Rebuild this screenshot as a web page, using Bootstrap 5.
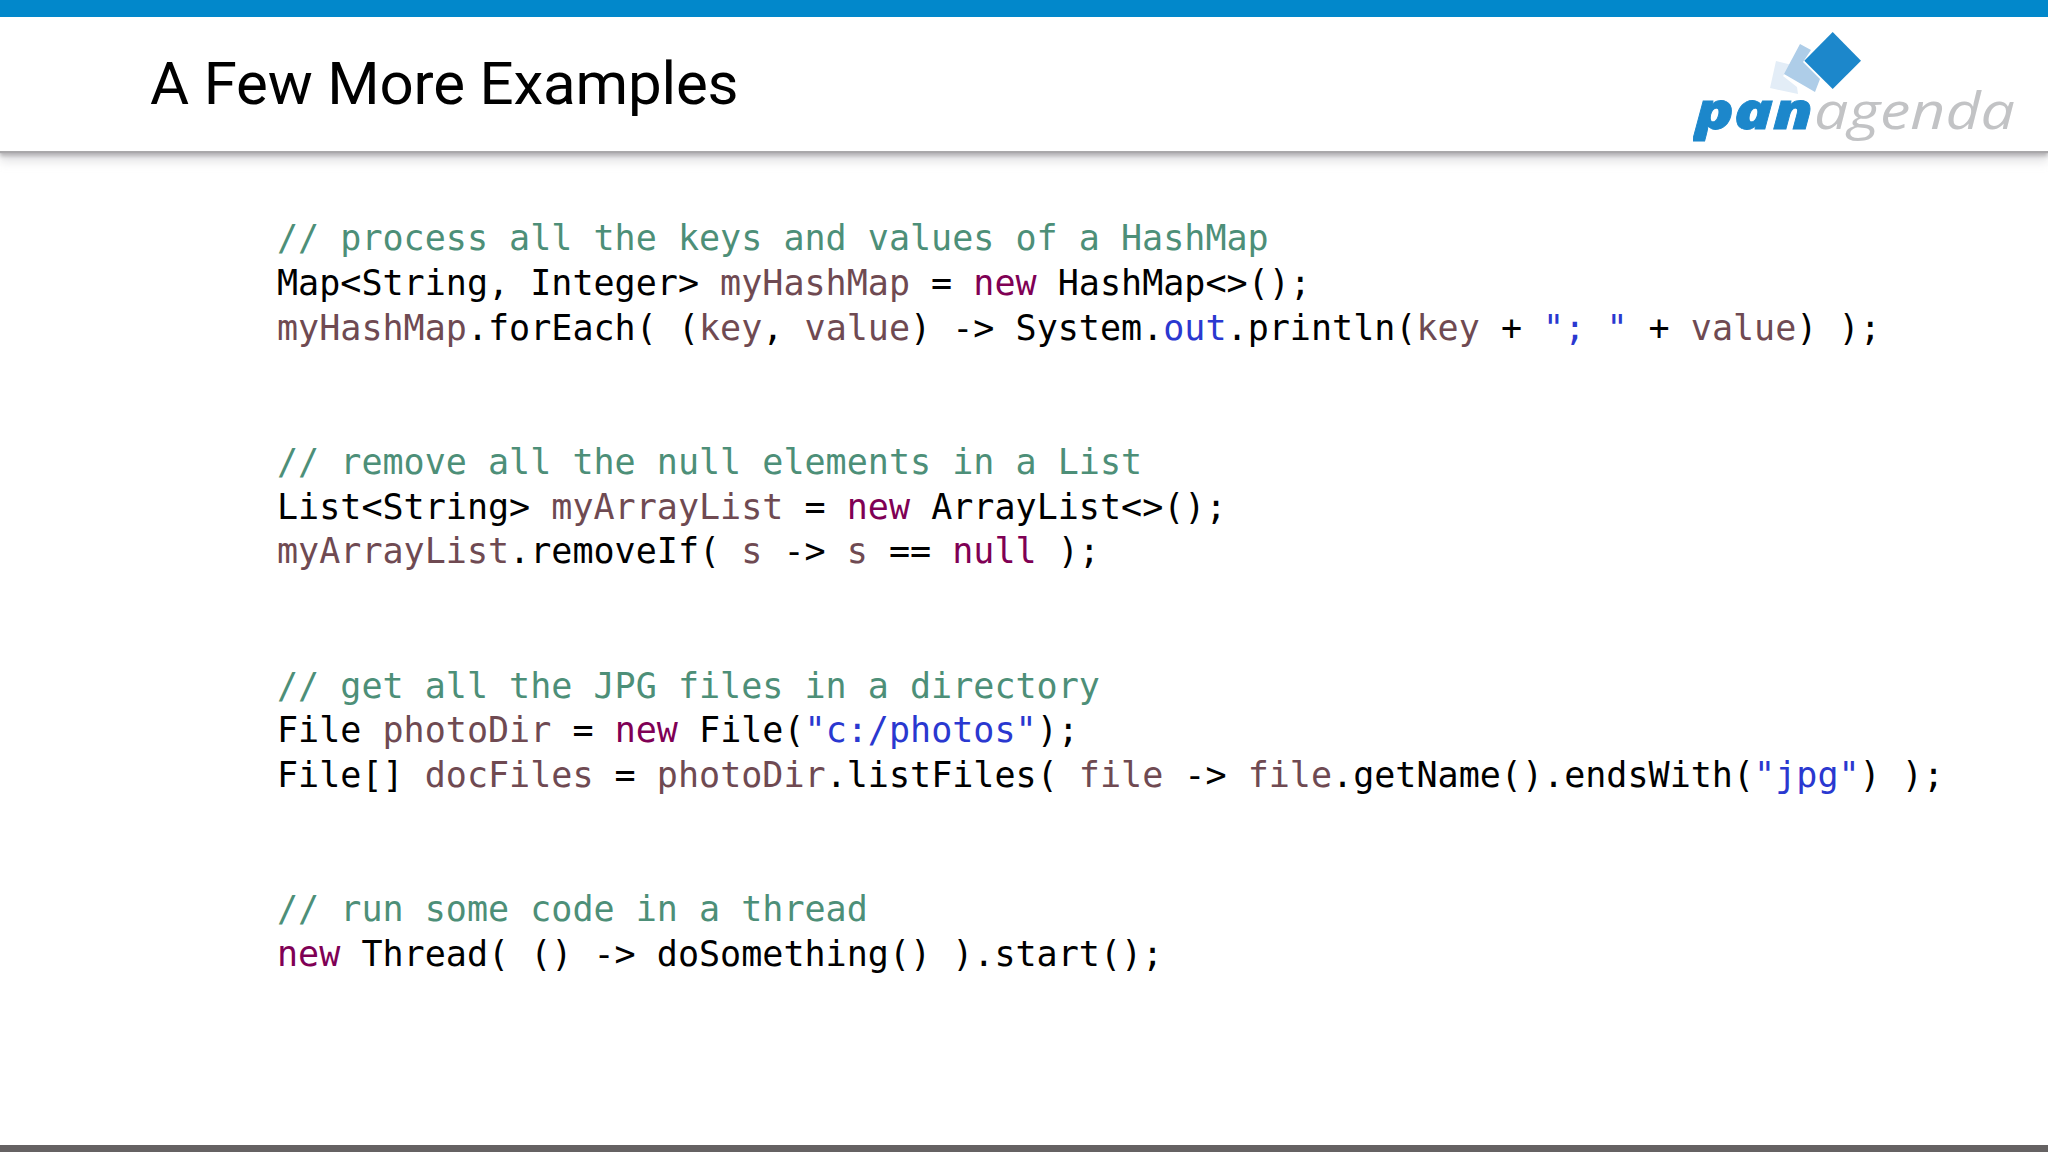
<!DOCTYPE html>
<html lang="en">
<head>
<meta charset="utf-8">
<title>A Few More Examples</title>
<link href="https://cdn.jsdelivr.net/npm/bootstrap@5.3.0/dist/css/bootstrap.min.css" rel="stylesheet">
<style>
html,body{height:100%;background:#fff;overflow:hidden}
.slide-page{height:1152px;border-top:17px solid #0288cb;border-bottom:7px solid #656263}
.slide-head{height:134px;padding-left:150px;padding-right:33px;box-shadow:0 2px 1px #a9a8aa,0 5px 4px #b5b4b6,0 11px 9px rgba(190,190,195,.4)}
.slide-title{font:400 60px/1 Roboto,sans-serif;color:#000;margin:0;letter-spacing:-.17px}
.brand-logo{width:322px;height:134px;flex:none}
.word-pan{font:italic 800 52px "Open Sans",sans-serif;fill:#1c87cb;stroke:#1c87cb;stroke-width:.8px}
.word-agenda{font:italic 400 52px "Open Sans",sans-serif;fill:#c2c3c5}
.code-block{margin:0;padding:65px 0 0 277px;font:400 35.05px/44.75px "DejaVu Sans Mono",monospace;color:#000;overflow:visible}
.tok-c{color:#4d8f78}.tok-v{color:#6f4a52}.tok-k{color:#7f0055}.tok-s{color:#2a38d0}
</style>
</head>
<body>
<div class="slide-page d-flex flex-column">
<header class="slide-head d-flex justify-content-between align-items-start flex-shrink-0">
<h1 class="slide-title align-self-center">A Few More Examples</h1>
<svg class="brand-logo" viewBox="1693 17 322 134" role="img" aria-label="panagenda">
<polygon fill="#e3edf7" points="1776,61 1792,65 1783,76 1797,87 1798,94 1770,88"/>
<polygon fill="#aecde8" points="1800,44 1811,50 1803,62 1820,79 1815,92 1784,74"/>
<polygon fill="#1c87cb" points="1832.7,32 1861,60.7 1832.7,89 1804.3,60.7"/>
<text x="1695" y="128.5" class="word-pan" textLength="118" lengthAdjust="spacingAndGlyphs">pan</text>
<text x="1814" y="128.5" class="word-agenda" textLength="201" lengthAdjust="spacingAndGlyphs">agenda</text>
</svg>
</header>
<pre class="code-block"><span class="tok-c">// process all the keys and values of a HashMap</span>
Map&lt;String, Integer&gt; <span class="tok-v">myHashMap</span> = <span class="tok-k">new</span> HashMap&lt;&gt;();
<span class="tok-v">myHashMap</span>.forEach( (<span class="tok-v">key</span>, <span class="tok-v">value</span>) -&gt; System.<span class="tok-s">out</span>.println(<span class="tok-v">key</span> + <span class="tok-s">"; "</span> + <span class="tok-v">value</span>) );


<span class="tok-c">// remove all the null elements in a List</span>
List&lt;String&gt; <span class="tok-v">myArrayList</span> = <span class="tok-k">new</span> ArrayList&lt;&gt;();
<span class="tok-v">myArrayList</span>.removeIf( <span class="tok-v">s</span> -&gt; <span class="tok-v">s</span> == <span class="tok-k">null</span> );


<span class="tok-c">// get all the JPG files in a directory</span>
File <span class="tok-v">photoDir</span> = <span class="tok-k">new</span> File(<span class="tok-s">"c:/photos"</span>);
File[] <span class="tok-v">docFiles</span> = <span class="tok-v">photoDir</span>.listFiles( <span class="tok-v">file</span> -&gt; <span class="tok-v">file</span>.getName().endsWith(<span class="tok-s">"jpg"</span>) );


<span class="tok-c">// run some code in a thread</span>
<span class="tok-k">new</span> Thread( () -&gt; doSomething() ).start();</pre>
</div>
<script src="https://cdn.jsdelivr.net/npm/bootstrap@5.3.0/dist/js/bootstrap.bundle.min.js"></script>
</body>
</html>
